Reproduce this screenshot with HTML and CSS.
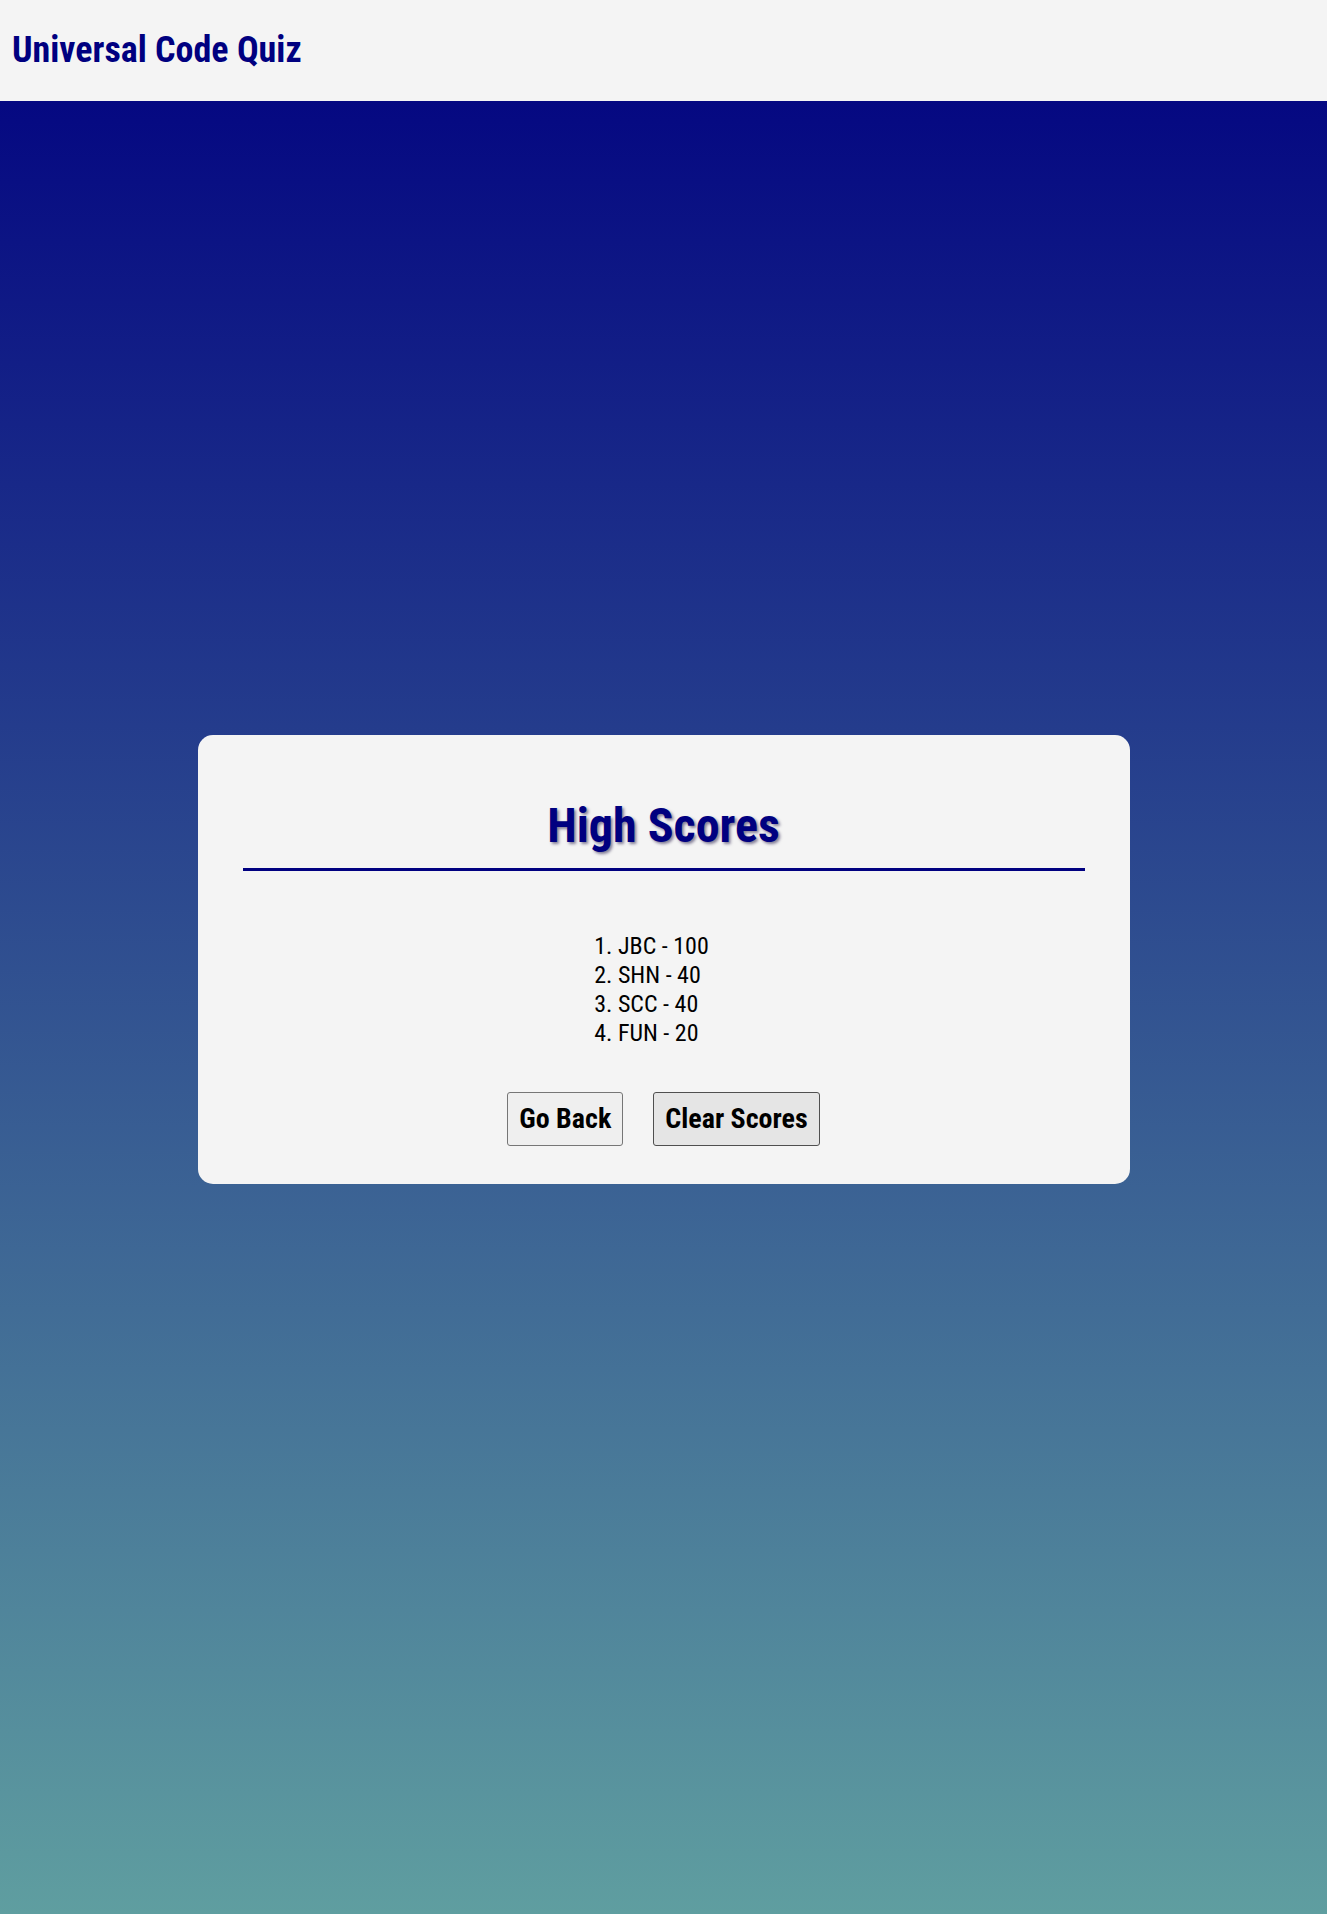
FILE: index.html
```html
<!DOCTYPE html>
<html lang="en">
<head>
<meta charset="utf-8">
<title>Universal Code Quiz - High Scores</title>
<link rel="stylesheet" href="styles.css">
</head>
<body>
<header class="site-header">
  <h1 class="site-title">Universal Code Quiz</h1>
</header>
<main class="stage">
  <section class="card">
    <h2 class="card-title">High Scores</h2>
    <div class="scores-wrap">
      <ol class="scores">
        <li>JBC - 100</li>
        <li>SHN - 40</li>
        <li>SCC - 40</li>
        <li>FUN - 20</li>
      </ol>
    </div>
    <div class="actions">
      <button class="btn" type="button">Go Back</button>
      <button class="btn btn-hover" type="button">Clear Scores</button>
    </div>
  </section>
</main>
</body>
</html>
```

FILE: styles.css
```css
html, body {
  margin: 0;
  padding: 0;
}

body {
  min-height: 1914px;
  background: linear-gradient(to bottom, #000080, #5f9ea0);
  font-family: "Roboto Condensed", Roboto, "Liberation Sans", sans-serif;
  font-stretch: condensed;
  display: flex;
  flex-direction: column;
}

.site-header {
  height: 101px;
  background: #f4f4f4;
  display: flex;
  align-items: center;
  padding: 0 12px;
  box-sizing: border-box;
}

.site-title {
  margin: 0 0 1px;
  font-size: 36px;
  font-weight: 700;
  color: #000080;
  line-height: 1;
}

.stage {
  display: flex;
  justify-content: center;
  padding-top: 634px;
}

.card {
  width: 932px;
  background: #f4f4f4;
  border-radius: 15px;
  padding: 63px 45px 38px;
  box-sizing: border-box;
}

.card-title {
  margin: 0;
  text-align: center;
  font-size: 48px;
  font-weight: 700;
  color: #000080;
  line-height: 56px;
  padding-bottom: 14px;
  border-bottom: 3px solid #000080;
  text-shadow: 2px 2px 3px rgba(20, 10, 60, 0.5);
}

.scores-wrap {
  display: flex;
  justify-content: center;
  margin-top: 61px;
}

.scores {
  margin: 0 24px 0 0;
  padding: 0;
  list-style-position: inside;
  font-size: 24px;
  line-height: 29px;
  color: #000;
}

.actions {
  display: flex;
  justify-content: center;
  gap: 30px;
  margin-top: 44px;
}

.btn {
  font-family: inherit;
  font-stretch: condensed;
  font-size: 28px;
  font-weight: 700;
  color: #000;
  background: #efefef;
  border: 1px solid #767676;
  border-radius: 3px;
  padding: 9px 11px;
  line-height: 34px;
}

.btn-hover {
  background: #e5e5e5;
  border-color: #4f4f4f;
}
```
